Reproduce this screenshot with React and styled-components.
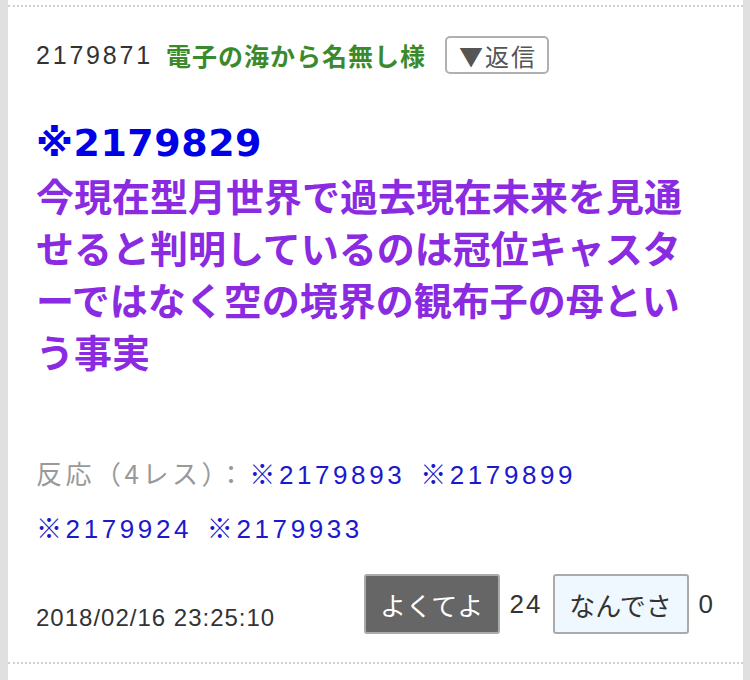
import styled, { createGlobalStyle } from "styled-components";

const GlobalStyle = createGlobalStyle`
    html, body {
        margin: 0;
        padding: 0;
        background: #fff;
    }
    body {
        font-family: "Noto Sans CJK JP", "Liberation Sans", sans-serif;
        color: #333;
    }
`;

const reactions = ["2179893", "2179899", "2179924", "2179933"];

export default function App() {
    return (
        <>
            <GlobalStyle />
            <Page>
                <Column>
                    <Post>
                        <Header>
                            <Num>2179871</Num>
                            <Name>電子の海から名無し様</Name>
                            <ReplyButton>▼返信</ReplyButton>
                        </Header>
                        <Body>
                            <Anchor>※2179829</Anchor>
                            <br />
                            <Message>
                                今現在型月世界で過去現在未来を見通せると判明しているのは冠位キャスターではなく空の境界の観布子の母という事実
                            </Message>
                        </Body>
                        <Reactions>
                            <ReactionLabel>反応（4レス）：</ReactionLabel>{" "}
                            {reactions.map((r) => (
                                <span key={r}>
                                    <ReactionLink>※{r}</ReactionLink>{" "}
                                </span>
                            ))}
                        </Reactions>
                        <Footer>
                            <Date>2018/02/16 23:25:10</Date>
                            <Votes>
                                <VoteButton dark>よくてよ</VoteButton>
                                <Count>24</Count>
                                <VoteButton>なんでさ</VoteButton>
                                <Count>0</Count>
                            </Votes>
                        </Footer>
                    </Post>
                </Column>
            </Page>
        </>
    );
}

const Page = styled.div`
    background: #e0e0e0;
    padding: 0 7px 0 8px;
    min-height: 680px;
    box-sizing: border-box;
`;

const Column = styled.div`
    background: #fff;
    min-height: 680px;
    padding-top: 5px;
`;

const Post = styled.article`
    border-top: 2px dotted #cfcfcf;
    border-bottom: 2px dotted #cfcfcf;
    padding: 29px 28px 28px 28px;
`;

const Header = styled.div`
    display: flex;
    align-items: center;
    height: 38px;
    font-size: 24px;
`;

const Num = styled.span`
    color: #333;
    font-family: "Liberation Sans", "Noto Sans CJK JP", sans-serif;
    font-size: 25px;
    letter-spacing: 2.8px;
    margin-right: 13px;
`;

const Name = styled.span`
    color: #3a8a2c;
    font-weight: bold;
    font-size: 25px;
    letter-spacing: 1px;
    margin-right: 19px;
`;

const ReplyButton = styled.span`
    display: inline-flex;
    align-items: center;
    height: 38px;
    box-sizing: border-box;
    padding: 0 10px 0 12px;
    border: 2px solid #b0b0b0;
    border-radius: 5px;
    color: #555;
    font-size: 24px;
    letter-spacing: 2px;
`;

const Body = styled.div`
    margin-top: 40px;
    font-size: 38px;
    line-height: 52px;
    font-weight: bold;
`;

const Anchor = styled.span`
    color: #0000e6;
    font-size: 38px;
    letter-spacing: 0.5px;
    font-family: "DejaVu Sans", "Noto Sans CJK JP", sans-serif;
`;

const Message = styled.span`
    color: #8a2be2;
    font-size: 38px;
`;

const Reactions = styled.div`
    margin-top: 70px;
    font-size: 26px;
    line-height: 52px;
`;

const ReactionLabel = styled.span`
    color: #999;
    letter-spacing: 3.5px;
    margin-right: -4px;
`;

const ReactionLink = styled.span`
    color: #1a1acc;
    letter-spacing: 3.6px;
    margin-right: 9px;
    font-family: "Liberation Sans", "Noto Sans CJK JP", sans-serif;
`;

const Footer = styled.div`
    margin-top: 19px;
    display: flex;
    justify-content: space-between;
    align-items: flex-end;
`;

const Date = styled.span`
    font-size: 24px;
    letter-spacing: 1px;
    color: #333;
    font-family: "Liberation Sans", sans-serif;
    margin-bottom: 2px;
`;

const Votes = styled.div`
    display: flex;
    align-items: center;
    gap: 10px;
`;

const VoteButton = styled.span`
    display: inline-flex;
    align-items: center;
    justify-content: center;
    width: 136px;
    height: 60px;
    box-sizing: border-box;
    border: 2px solid #aaa;
    border-radius: 3px;
    font-size: 26px;
    background: ${({ dark }) => (dark ? "#666" : "#f0f8ff")};
    color: ${({ dark }) => (dark ? "#fff" : "#333")};
`;

const Count = styled.span`
    font-size: 26px;
    letter-spacing: 2px;
    color: #333;
    font-family: "Liberation Sans", sans-serif;
`;
